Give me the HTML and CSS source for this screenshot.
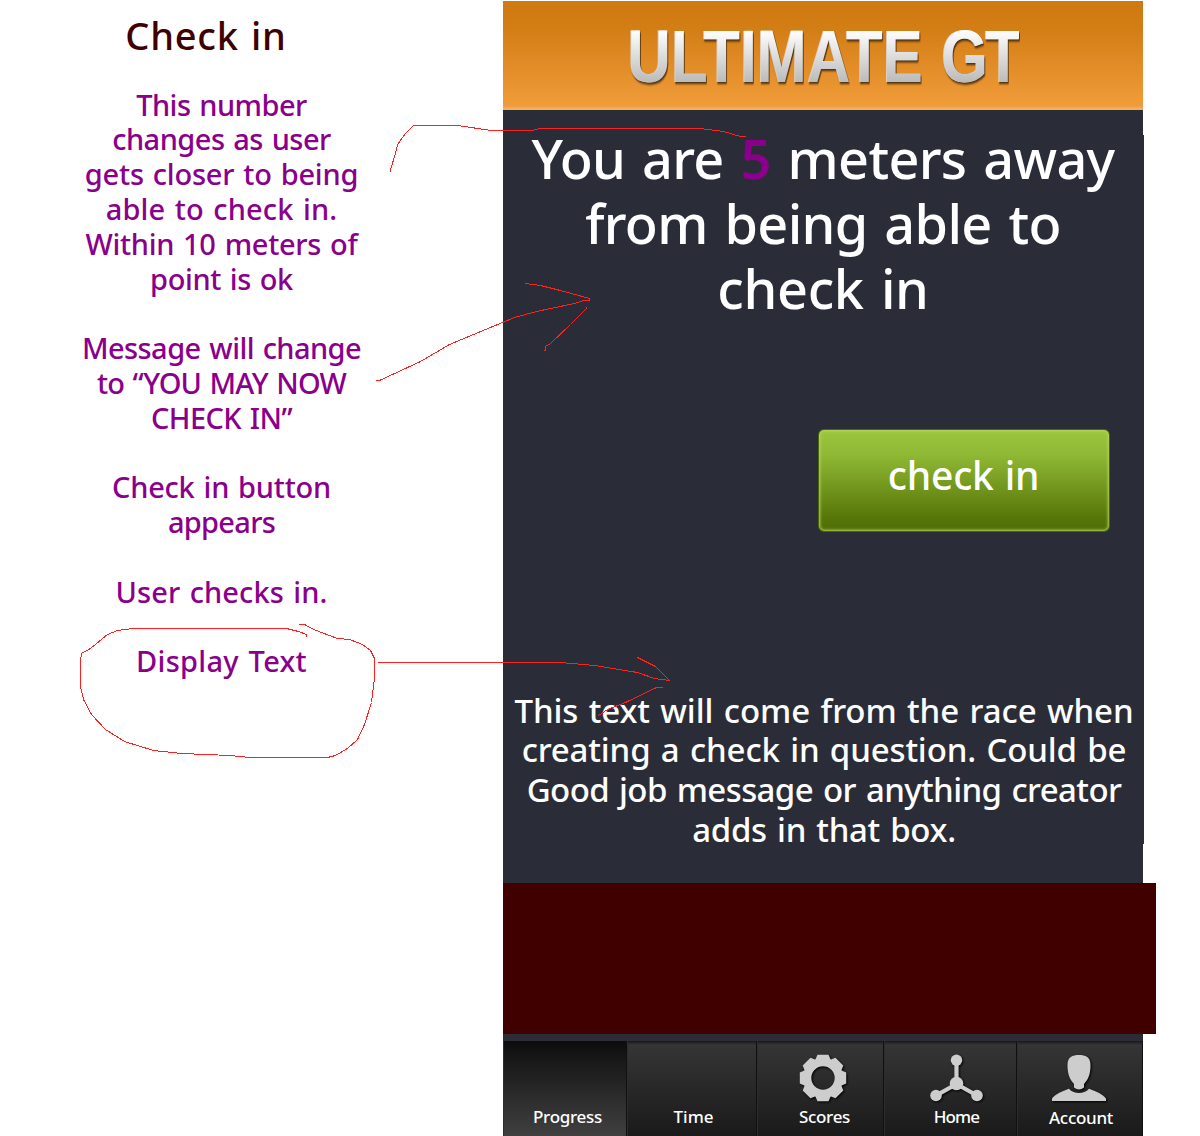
FILE: index.html
```html
<!DOCTYPE html>
<html lang="en">
<head>
<meta charset="utf-8">
<title>Ultimate GT – Check in</title>
<link rel="stylesheet" href="styles.css">
</head>
<body>
<div class="board">
  <aside class="notes">
    <h1 class="notes-title">Check in</h1>
    <p class="note note-number"><span class="line">This number</span><span class="line">changes as user</span><span class="line">gets closer to being</span><span class="line">able to check in.</span><span class="line">Within 10 meters of</span><span class="line">point is ok</span></p>
    <p class="note note-message"><span class="line">Message will change</span><span class="line">to “YOU MAY NOW</span><span class="line">CHECK IN”</span></p>
    <p class="note note-button"><span class="line">Check in button</span><span class="line">appears</span></p>
    <p class="note note-user"><span class="line">User checks in.</span></p>
    <p class="note note-display"><span class="line">Display Text</span></p>
  </aside>
  <main class="phone">
    <header class="brand"><span class="logo">ULTIMATE <span class="logo-gt">GT</span></span></header>
    <section class="screen">
      <p class="distance"><span class="line">You are <b class="meters">5</b> meters away</span><span class="line">from being able to</span><span class="line">check in</span></p>
      <button class="check-in" type="button">check in</button>
      <p class="race-text"><span class="line">This text will come from the race when</span><span class="line">creating a check in question. Could be</span><span class="line">Good job message or anything creator</span><span class="line">adds in that box.</span></p>
    </section>
    <div class="banner"></div>
    <nav class="tabs">
      <a class="tab tab-progress"><span class="label">Progress</span></a>
      <a class="tab tab-time"><span class="label">Time</span></a>
      <a class="tab tab-scores">
        <svg class="icon" width="48" height="48" viewBox="-24 -24 48 48">
          <circle r="15.7" fill="none" stroke="#cdcdcd" stroke-width="8"/>
          <g fill="#cdcdcd"><path id="tooth" d="M-8-17.500 -5.500-23.200H5.500L8-17.500Z"/><use href="#tooth" transform="rotate(45)"/><use href="#tooth" transform="rotate(90)"/><use href="#tooth" transform="rotate(135)"/><use href="#tooth" transform="rotate(180)"/><use href="#tooth" transform="rotate(225)"/><use href="#tooth" transform="rotate(270)"/><use href="#tooth" transform="rotate(315)"/></g>
        </svg>
        <span class="label">Scores</span></a>
      <a class="tab tab-home">
        <svg class="icon" width="54" height="48" viewBox="0 0 54 48">
          <path d="M26.500 7v23L6 41.500M26.500 30 47 41.500" fill="none" stroke="#cdcdcd" stroke-width="4.200"/>
          <g fill="#cdcdcd"><circle cx="26.500" cy="6.200" r="5.700"/><circle cx="26.500" cy="29.500" r="6.800"/><circle cx="6" cy="41.500" r="5.800"/><circle cx="47" cy="41.500" r="5.800"/></g>
        </svg>
        <span class="label">Home</span></a>
      <a class="tab tab-account">
        <svg class="icon" width="54" height="48" viewBox="0 0 54 48">
          <g fill="#cdcdcd"><path d="M27 1C33.500 1 38.500 3 38.500 11C38.500 20 36.500 25 32 30V33.500Q27 37.500 22 33.500V30C17.500 25 15.500 20 15.500 11C15.500 3 20.500 1 27 1Z"/><path d="M0 47V44.500C4 39.500 10 37.500 17 34.700C22 40.500 32 40.500 37 34.700C44 37.500 50 39.500 54 44.500V47Z"/></g>
        </svg>
        <span class="label">Account</span></a>
    </nav>
  </main>
  <svg class="marks" width="1200" height="1136" viewBox="0 0 1200 1136">
    <path d="M390.500 171.500V169.500L395.500 153.500 397.500 144.500 405.500 133.500 413.500 125.500H457.500L491.500 130.500H531.500L540.500 128.500H700.500L723.500 131.500 740.500 136.500H745.500"/>
    <path d="M375.500 380.500H379.500L420.500 361.500 449.500 344.500 514.500 317.500 536.500 311.500 574.500 303.500 583.500 300.500H589.500V298.500L560.500 290.500 540.500 285.500 525.500 283.500M586.500 306.500V308.500L570.500 324.500 550.500 343.500 545.500 346.500V350.500H543.500"/>
    <path d="M377.500 662.500H530.500L560.500 662.500 594.500 665.500 637.500 672.500 654.500 678.500 669.500 680.500 655.500 666.500 643.500 660.500 637.500 657.500M662.500 687.500H656.500L625.500 702.500 607.500 709.500 598.500 715.500"/>
    <path d="M306.500 636.500V634.500L298.500 631.500 286.500 628.500H133.500L117.500 630.500 107.500 634.500 90.500 648.500 81.500 653.500 80.500 660.500V686.500L83.500 699.500 91.500 714.500 105.500 729.500 124.500 741.500 153.500 750.500 181.500 753.500 230.500 755.500 249.500 757.500H327.500L335.500 755.500 347.500 748.500 357.500 739.500 364.500 724.500 371.500 702.500 374.500 678.500V658.500L370.500 650.500 362.500 644.500 349.500 639.500 337.500 638.500 321.500 632.500 311.500 628.500 304.500 624.500H298.500"/>
  </svg>
</div>
</body>
</html>
```
FILE: styles.css
```css
body { margin: 0; background: #fff; font-family: "Noto Sans", "Open Sans", sans-serif; font-weight: 500; }
p, h1 { margin: 0; font-weight: inherit; }
.board { position: relative; display: flex; width: 1200px; height: 1136px; overflow: hidden; }
.line { display: block; white-space: pre; }

/* Annotation column */
.notes { box-sizing: border-box; width: 503px; padding: 12px 60px 0 0; text-align: center; color: #8b008b; font-size: 29px; line-height: 34.8px; word-spacing: .06em; }
.notes-title { margin: 0 31px 29.7px 0; color: #400000; font-size: 38px; line-height: 46px; letter-spacing: .75px; }
.note { margin-bottom: 34.8px; }
.note-number { letter-spacing: -.4px; }
.note-number .line:nth-child(-n+2) { letter-spacing: -.52px; }
.note-number .line:nth-child(3) { letter-spacing: -.23px; }
.note-number .line:nth-child(4) { letter-spacing: .15px; }
.note-number .line:nth-child(5) { letter-spacing: -.3px; }
.note-message { letter-spacing: -.57px; }
.note-message .line:nth-child(2) { letter-spacing: -.84px; }
.note-button { letter-spacing: -.25px; }
.note-button .line:nth-child(2) { letter-spacing: -.7px; }
.note-user { letter-spacing: .1px; }
.note-display { letter-spacing: .3px; }

/* Phone mockup */
.phone { display: flex; flex-direction: column; width: 653px; padding-top: 1px; }
.brand { box-sizing: border-box; width: 640px; height: 109px; padding-top: 12px; text-align: center; background: linear-gradient(#cf7910, #d37d15 25%, #f09c39 96%, #f3b064 99%); }
.logo { display: inline-block; transform: scaleX(.797); font: bold 75px/86px "Liberation Sans", Arial, sans-serif; letter-spacing: .3px; color: transparent; background: linear-gradient(#fff 20%, #bbb 80%); -webkit-background-clip: text; background-clip: text; filter: drop-shadow(-1px 0 0 #e2e2e2) drop-shadow(1px 2px 1px #000a); }
.logo-gt { margin-left: 2px; letter-spacing: -3.5px; }
.screen { position: relative; box-sizing: border-box; display: flex; flex-direction: column; width: 640px; height: 773px; padding-top: 16px; background: #2a2d38; color: #fff; text-align: center; }
.screen::after { content: ""; position: absolute; top: 25px; right: -1px; width: 1px; height: 709px; background: #2a2d38; }
.distance { font-size: 54px; line-height: 65px; font-weight: 500; letter-spacing: -.68px; word-spacing: .065em; }
.distance .line:nth-child(3) { letter-spacing: -.35px; }
.meters { font-weight: 600; color: #8b008b; }
.check-in { box-sizing: border-box; align-self: flex-end; width: 292px; height: 103px; margin: 108px 33px 0 0; padding: 0 1px 12px 0; border: 1px solid #4a660c; border-radius: 6px; background: linear-gradient(#9dc63f, #8fb834 25%, #567508 88%, #506d08); box-shadow: inset 0 0 3px 1px #b5d75c; color: #fff; font: 500 39px/46px "Noto Sans", sans-serif; letter-spacing: -.2px; word-spacing: 1px; }
.race-text { margin: 158.5px -2px 0 0; font-size: 33px; line-height: 39.7px; letter-spacing: -.09px; word-spacing: .06em; }
.race-text .line:nth-child(2) { letter-spacing: -.15px; }
.race-text .line:nth-child(3) { letter-spacing: -.6px; }
.race-text .line:nth-child(4) { letter-spacing: -.3px; }
.banner { width: 653px; height: 151px; background: #400000; }

/* Bottom tab bar */
.tabs { display: grid; grid-template-columns: 124px 130px 127px 133px 126px; width: 640px; height: 95px; border-top: 7px solid #2a2d38; color: #fff; font-size: 17px; line-height: 24px; letter-spacing: -.3px; }
.tab { box-sizing: border-box; display: flex; flex-direction: column; align-items: center; justify-content: flex-end; padding-bottom: 7px; background: linear-gradient(#181818, #353535 4%, #1a1a1a); border-left: 1px solid #2d2d2d; border-right: 1px solid #101010; }
.tab-progress { padding-left: 5px; background: linear-gradient(#0c0c0c, #181818 20%, #404040); }
.tab-time { padding-left: 3px; letter-spacing: 0; }
.tab-scores { padding-left: 4px; }
.tab-scores .label { padding-left: 4px; }
.tab-home { padding-left: 12px; letter-spacing: -.85px; }
.tab-account { padding-bottom: 6px; }
.tab-account .label { padding-left: 2px; }
.icon { margin-bottom: 3px; filter: drop-shadow(1px 1px 1px #000); }
.tab-account .icon { margin: 0 2px 4px 0; }

.marks { position: absolute; inset: 0; fill: none; stroke: #ff2020; shape-rendering: crispEdges; pointer-events: none; }
```
